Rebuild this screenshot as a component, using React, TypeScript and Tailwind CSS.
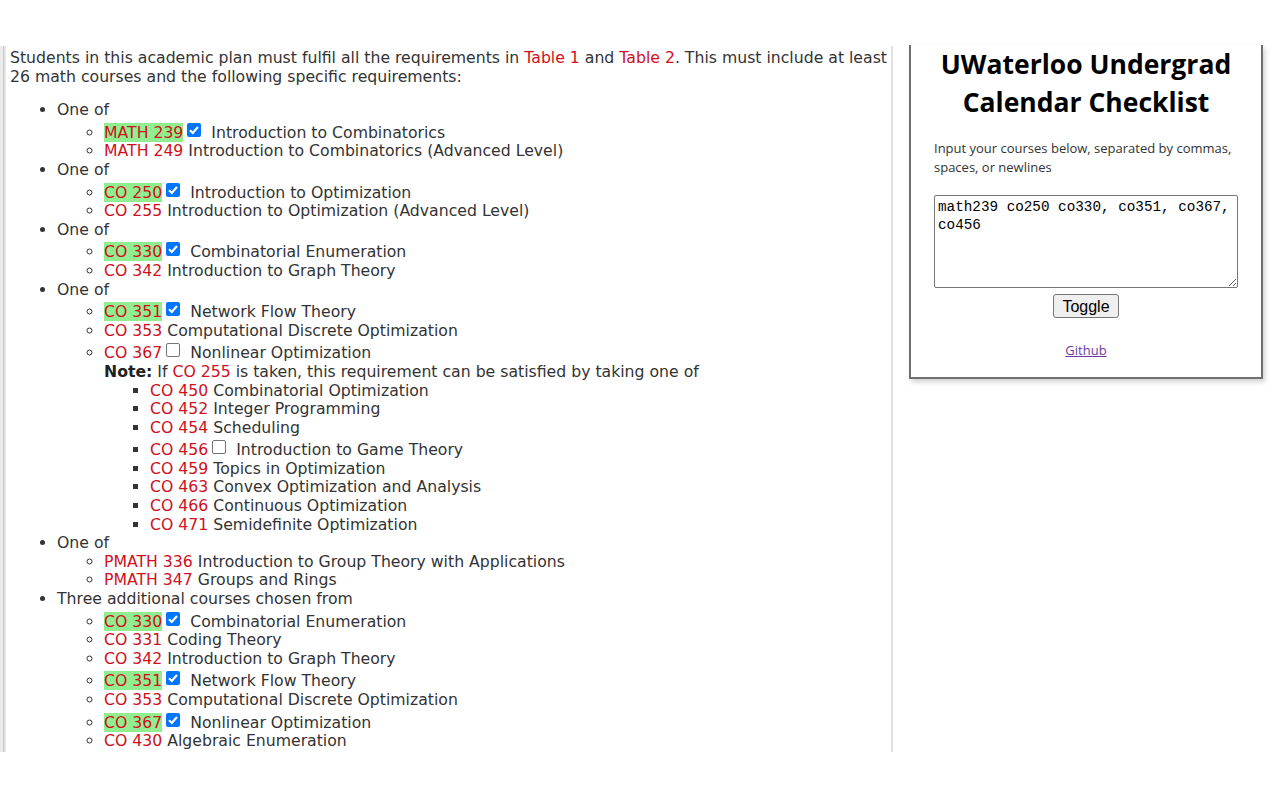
import clsx from 'clsx';

type Course = { code: string; title: string; check?: 'on' | 'off' };

type Group = { label: string; courses: Course[]; note?: { after: string; courses: Course[] } };

const groups: Group[] = [
    {
        label: 'One of',
        courses: [
            { code: 'MATH 239', title: 'Introduction to Combinatorics', check: 'on' },
            { code: 'MATH 249', title: 'Introduction to Combinatorics (Advanced Level)' },
        ],
    },
    {
        label: 'One of',
        courses: [
            { code: 'CO 250', title: 'Introduction to Optimization', check: 'on' },
            { code: 'CO 255', title: 'Introduction to Optimization (Advanced Level)' },
        ],
    },
    {
        label: 'One of',
        courses: [
            { code: 'CO 330', title: 'Combinatorial Enumeration', check: 'on' },
            { code: 'CO 342', title: 'Introduction to Graph Theory' },
        ],
    },
    {
        label: 'One of',
        courses: [
            { code: 'CO 351', title: 'Network Flow Theory', check: 'on' },
            { code: 'CO 353', title: 'Computational Discrete Optimization' },
            { code: 'CO 367', title: 'Nonlinear Optimization', check: 'off' },
        ],
        note: {
            after: 'CO 367',
            courses: [
                { code: 'CO 450', title: 'Combinatorial Optimization' },
                { code: 'CO 452', title: 'Integer Programming' },
                { code: 'CO 454', title: 'Scheduling' },
                { code: 'CO 456', title: 'Introduction to Game Theory', check: 'off' },
                { code: 'CO 459', title: 'Topics in Optimization' },
                { code: 'CO 463', title: 'Convex Optimization and Analysis' },
                { code: 'CO 466', title: 'Continuous Optimization' },
                { code: 'CO 471', title: 'Semidefinite Optimization' },
            ],
        },
    },
    {
        label: 'One of',
        courses: [
            { code: 'PMATH 336', title: 'Introduction to Group Theory with Applications' },
            { code: 'PMATH 347', title: 'Groups and Rings' },
        ],
    },
    {
        label: 'Three additional courses chosen from',
        courses: [
            { code: 'CO 330', title: 'Combinatorial Enumeration', check: 'on' },
            { code: 'CO 331', title: 'Coding Theory' },
            { code: 'CO 342', title: 'Introduction to Graph Theory' },
            { code: 'CO 351', title: 'Network Flow Theory', check: 'on' },
            { code: 'CO 353', title: 'Computational Discrete Optimization' },
            { code: 'CO 367', title: 'Nonlinear Optimization', check: 'on' },
            { code: 'CO 430', title: 'Algebraic Enumeration' },
        ],
    },
];

// native-looking checkbox, drawn so it renders the same everywhere
function Box({ on }: { on: boolean }) {
    return (
        <span
            className={clsx(
                'inline-block w-[14px] h-[14px] ml-[4px] mr-[5px] mt-[3px] align-[1px] rounded-[2px]',
                on ? 'bg-[#0075ff]' : 'bg-white border border-[#767676]'
            )}
        >
            {on && (
                <svg viewBox="0 0 14 14" className="w-[14px] h-[14px] block">
                    <path d="M3 7.2 L5.8 10 L11 4" fill="none" stroke="white" strokeWidth="2.2" />
                </svg>
            )}
        </span>
    );
}

function CourseLine({ c }: { c: Course }) {
    return (
        <>
            <span className={clsx('text-[#d0101c]', c.check === 'on' && 'bg-[#90ee90]')}>{c.code}</span>
            {c.check ? <Box on={c.check === 'on'} /> : ' '}
            {c.check && ' '}
            {c.title}
        </>
    );
}

function Requirements() {
    return (
        <div className="font-['DejaVu_Sans',sans-serif] text-[15.7px] leading-[18.6px] text-[#333]">
            <p>
                Students in this academic plan must fulfil all the requirements in{' '}
                <span className="text-[#d0101c]">Table 1</span> and{' '}
                <span className="text-[#d0101c]">Table 2</span>. This must include at least 26 math courses and
                the following specific requirements:
            </p>
            <ul className="list-disc pl-[47px] mt-[15px]">
                {groups.map((g, i) => (
                    <li key={i}>
                        {g.label}
                        <ul className="list-[circle] pl-[47px]">
                            {g.courses.map((c) => (
                                <li key={c.code}>
                                    <CourseLine c={c} />
                                    {g.note && g.note.after === c.code && (
                                        <>
                                            <div>
                                                <b className="text-[#222]">Note:</b> If{' '}
                                                <span className="text-[#d0101c]">CO 255</span> is taken, this
                                                requirement can be satisfied by taking one of
                                            </div>
                                            <ul className="list-[square] pl-[46px]">
                                                {g.note.courses.map((n) => (
                                                    <li key={n.code}>
                                                        <CourseLine c={n} />
                                                    </li>
                                                ))}
                                            </ul>
                                        </>
                                    )}
                                </li>
                            ))}
                        </ul>
                    </li>
                ))}
            </ul>
        </div>
    );
}

function Checklist() {
    return (
        <div className="w-[354px] border-x-2 border-b-2 border-[#707070] bg-white shadow-[2px_3px_5px_rgba(0,0,0,0.18)] px-[23px] pb-[16px] text-center font-['Open_Sans',sans-serif]">
            <h1 className="-mt-[1px] text-[26.5px] leading-[38px] font-bold text-black">
                UWaterloo Undergrad Calendar Checklist
            </h1>
            <p className="mt-[18px] text-left text-[13px] leading-[19px] text-[#333]">
                Input your courses below, separated by commas, spaces, or newlines
            </p>
            <textarea
                className="mt-[18px] block w-full h-[93px] border border-[#767676] rounded-[2px] px-[3px] py-[2px] resize-y font-['Liberation_Mono',monospace] text-[14.3px] leading-[18px] text-black"
                defaultValue="math239 co250 co330, co351, co367, co456"
            />
            <button className="mt-[6px] h-[24px] px-[8px] rounded-[3px] border border-[#767676] bg-[#efefef] font-['Liberation_Sans',sans-serif] text-[16px] text-black">
                Toggle
            </button>
            <div className="mt-[19px]">
                <a href="#" className="text-[13px] leading-[19px] text-[#6c3ba4] underline">
                    Github
                </a>
            </div>
        </div>
    );
}

export default function App() {
    return (
        <div className="w-[1280px] h-[800px] bg-white pt-[46px] overflow-hidden">
            <div className="flex h-[706px]">
                <div className="w-[6px] flex">
                    <div className="w-[3px] bg-[#ececec]" />
                    <div className="w-[1px] bg-[#c8c8c8]" />
                    <div className="w-[2px] bg-[#e4e4e4]" />
                </div>
                <div className="w-[887px] border-r-2 border-[#e2e2e2] pl-[4px] pt-[3px] overflow-hidden">
                    <Requirements />
                </div>
                <div className="ml-[16px]">
                    <Checklist />
                </div>
            </div>
        </div>
    );
}
